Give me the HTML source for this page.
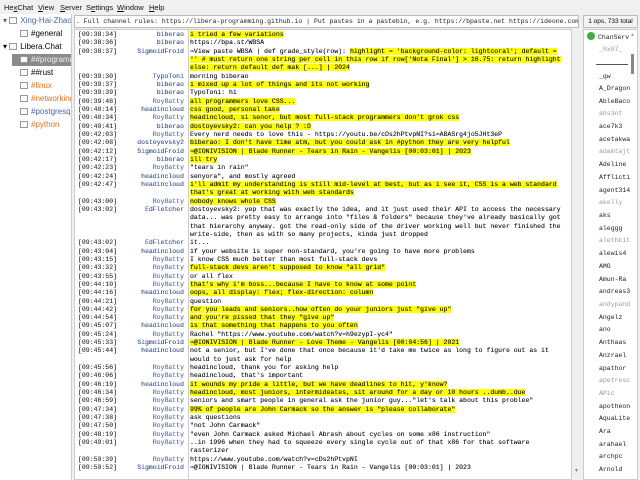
<!DOCTYPE html>
<html><head><meta charset="utf-8"><style>
*{margin:0;padding:0;box-sizing:border-box}
body{width:640px;height:480px;background:#f0f0f0;font-family:"Liberation Sans",sans-serif;position:relative;overflow:hidden}
.menu{position:absolute;top:0;left:0;width:640px;height:14px;font-size:7.5px;color:#111}
.menu span{position:absolute;top:3px}
.tree{position:absolute;left:0;top:14px;width:72px;height:466px;background:#fff;border-right:1px solid #ccc;font-size:8px;overflow:hidden}
.tree div{position:absolute;white-space:nowrap;height:12px;line-height:12px}
.ic{display:inline-block;width:8px;height:7px;border:1px solid #999;margin-right:3px;vertical-align:-1px;background:#fafafa}
.topic{position:absolute;left:74px;top:15px;width:505px;height:13px;background:#fff;border:1px solid #bbb;font:6.5px/11px "Liberation Mono",monospace;white-space:nowrap;overflow:hidden;padding-left:1px;color:#222}
.cnt{position:absolute;left:583px;top:15px;width:55px;height:13px;border:1px solid #bbb;font-size:6.5px;line-height:11px;text-align:center;background:#f4f4f4}
.chat{position:absolute;left:74px;top:29px;width:498px;height:451px;background:#fff;border:1px solid #ccc;overflow:hidden;font:6.5px/8.33px "Liberation Mono",monospace;color:#1a1a1a;padding-top:1px;text-shadow:0 0 0.3px #333}
.sep{position:absolute;left:113px;top:0;width:1px;height:451px;background:#ccc}
.r{position:relative;height:8.33px;white-space:pre}
.t{position:absolute;left:3px;color:#444}
.n{position:absolute;right:387px;color:#4a66b0;text-align:right}
.n.l{color:#6a87d0}
.m{position:absolute;left:115px}
.h{background:#ffff00}
.vs{position:absolute;left:572px;top:29px;width:10px;height:451px;background:#f0f0f0}
.ul{position:absolute;left:583px;top:29px;width:55px;height:451px;background:#fff;border:1px solid #ccc;font:6.5px "Liberation Mono",monospace;color:#222;overflow:hidden}
.ul div{position:absolute;left:15px;white-space:nowrap}
.g{color:#999}
</style></head><body>
<div class="menu"><span style="left:4px">He<u>x</u>Chat</span><span style="left:38px"><u>V</u>iew</span><span style="left:60px"><u>S</u>erver</span><span style="left:86px">S<u>e</u>ttings</span><span style="left:117px"><u>W</u>indow</span><span style="left:149px"><u>H</u>elp</span></div>
<div class="tree">
<div style="top:1px;left:3px;color:#4a66b0">▾ <span class="ic"></span>Xing-Hai-Zhao</div>
<div style="top:14px;left:20px"><span class="ic"></span>#general</div>
<div style="top:27px;left:3px">▾ <span class="ic"></span>Libera.Chat</div>
<div style="top:40px;left:12px;width:60px;background:#8a8a8a;color:#eee;padding-left:8px"><span class="ic"></span>##programming</div>
<div style="top:53px;left:20px"><span class="ic"></span>##rust</div>
<div style="top:66px;left:20px;color:#e07020"><span class="ic"></span>#linux</div>
<div style="top:79px;left:20px;color:#e07020"><span class="ic"></span>#networking</div>
<div style="top:92px;left:20px;color:#4a66b0"><span class="ic"></span>#postgresql</div>
<div style="top:105px;left:20px;color:#e07020"><span class="ic"></span>#python</div>
</div>
<div class="topic">. Full channel rules: https://libera-programming.github.io | Put pastes in a pastebin, e.g. https://bpaste.net https://ideone.com</div>
<div class="cnt">1 ops, 733 total</div>
<div class="chat"><div class="sep"></div>
<div class="r"><span class="t">[09:38:34]</span><span class="n">biberao</span><span class="m"><span class="h">i tried a few variations</span></span></div>
<div class="r"><span class="t">[09:38:36]</span><span class="n">biberao</span><span class="m">https://bpa.st/WBSA</span></div>
<div class="r"><span class="t">[09:38:37]</span><span class="n">SigmoidFroid</span><span class="m">⇒View paste WBSA | def grade_style(row): <span class="h">highlight = 'background-color: lightcoral'; default =</span></span></div>
<div class="r"><span class="m"><span class="h">'' # must return one string per cell in this row if row['Nota Final'] &gt; 16.75: return highlight</span></span></div>
<div class="r"><span class="m"><span class="h">else: return default def mak [...] | 2024</span></span></div>
<div class="r"><span class="t">[09:39:30]</span><span class="n">TypoToni</span><span class="m">morning biberao</span></div>
<div class="r"><span class="t">[09:39:37]</span><span class="n">biberao</span><span class="m"><span class="h">i mixed up a lot of things and its not working</span></span></div>
<div class="r"><span class="t">[09:39:39]</span><span class="n">biberao</span><span class="m">TypoToni: hi</span></div>
<div class="r"><span class="t">[09:39:48]</span><span class="n l">RoyBatty</span><span class="m"><span class="h">all programmers love CSS...</span></span></div>
<div class="r"><span class="t">[09:40:14]</span><span class="n">headincloud</span><span class="m"><span class="h">css good, personal take</span></span></div>
<div class="r"><span class="t">[09:40:34]</span><span class="n l">RoyBatty</span><span class="m"><span class="h">headincloud, si senor, but most full-stack programmers don't grok css</span></span></div>
<div class="r"><span class="t">[09:40:41]</span><span class="n">biberao</span><span class="m"><span class="h">dostoyevsky2: can you help ? :D</span></span></div>
<div class="r"><span class="t">[09:42:03]</span><span class="n l">RoyBatty</span><span class="m">Every nerd needs to love this - https://youtu.be/cDs2hPtvpNI?si=ABASrg4jo5JHt3eP</span></div>
<div class="r"><span class="t">[09:42:08]</span><span class="n">dostoyevsky2</span><span class="m"><span class="h">biberao: I don't have time atm, but you could ask in #python they are very helpful</span></span></div>
<div class="r"><span class="t">[09:42:12]</span><span class="n">SigmoidFroid</span><span class="m"><span class="h">⇒@IONIVISION | Blade Runner - Tears in Rain - Vangelis [00:03:01] | 2023</span></span></div>
<div class="r"><span class="t">[09:42:17]</span><span class="n">biberao</span><span class="m"><span class="h">ill try</span></span></div>
<div class="r"><span class="t">[09:42:23]</span><span class="n l">RoyBatty</span><span class="m">"tears in rain"</span></div>
<div class="r"><span class="t">[09:42:24]</span><span class="n">headincloud</span><span class="m">senyora", and mostly agreed</span></div>
<div class="r"><span class="t">[09:42:47]</span><span class="n">headincloud</span><span class="m"><span class="h">i'll admit my understanding is still mid-level at best, but as i see it, CSS is a web standard</span></span></div>
<div class="r"><span class="m"><span class="h">that's great at working with web standards</span></span></div>
<div class="r"><span class="t">[09:43:00]</span><span class="n l">RoyBatty</span><span class="m"><span class="h">nobody knows whole CSS</span></span></div>
<div class="r"><span class="t">[09:43:02]</span><span class="n">EdFletcher</span><span class="m">dostoyevsky2: yep that was exactly the idea, and it just used their API to access the necessary</span></div>
<div class="r"><span class="m">data... was pretty easy to arrange into "files &amp; folders" because they've already basically got</span></div>
<div class="r"><span class="m">that hierarchy anyway. got the read-only side of the driver working well but never finished the</span></div>
<div class="r"><span class="m">write-side, then as with so many projects, kinda just dropped</span></div>
<div class="r"><span class="t">[09:43:02]</span><span class="n">EdFletcher</span><span class="m">it...</span></div>
<div class="r"><span class="t">[09:43:04]</span><span class="n">headincloud</span><span class="m">if your website is super non-standard, you're going to have more problems</span></div>
<div class="r"><span class="t">[09:43:15]</span><span class="n l">RoyBatty</span><span class="m">I know CSS much better than most full-stack devs</span></div>
<div class="r"><span class="t">[09:43:32]</span><span class="n l">RoyBatty</span><span class="m"><span class="h">full-stack devs aren't supposed to know "all grid"</span></span></div>
<div class="r"><span class="t">[09:43:55]</span><span class="n l">RoyBatty</span><span class="m">or all flex</span></div>
<div class="r"><span class="t">[09:44:10]</span><span class="n l">RoyBatty</span><span class="m"><span class="h">that's why i'm boss...because I have to know at some point</span></span></div>
<div class="r"><span class="t">[09:44:16]</span><span class="n">headincloud</span><span class="m"><span class="h">oops, all display: flex; flex-direction: column</span></span></div>
<div class="r"><span class="t">[09:44:21]</span><span class="n l">RoyBatty</span><span class="m">question</span></div>
<div class="r"><span class="t">[09:44:42]</span><span class="n l">RoyBatty</span><span class="m"><span class="h">for you leads and seniors..how often do your juniors just "give up"</span></span></div>
<div class="r"><span class="t">[09:44:54]</span><span class="n l">RoyBatty</span><span class="m"><span class="h">and you're pissed that they "give up"</span></span></div>
<div class="r"><span class="t">[09:45:07]</span><span class="n">headincloud</span><span class="m"><span class="h">is that something that happens to you often</span></span></div>
<div class="r"><span class="t">[09:45:24]</span><span class="n l">RoyBatty</span><span class="m">Rachel "https://www.youtube.com/watch?v=h9ezypI-yc4"</span></div>
<div class="r"><span class="t">[09:45:33]</span><span class="n">SigmoidFroid</span><span class="m"><span class="h">⇒@IONIVISION | Blade Runner - Love Theme - Vangelis [00:04:56] | 2021</span></span></div>
<div class="r"><span class="t">[09:45:44]</span><span class="n">headincloud</span><span class="m">not a senior, but I've done that once because it'd take me twice as long to figure out as it</span></div>
<div class="r"><span class="m">would to just ask for help</span></div>
<div class="r"><span class="t">[09:45:56]</span><span class="n l">RoyBatty</span><span class="m">headincloud, thank you for asking help</span></div>
<div class="r"><span class="t">[09:46:06]</span><span class="n l">RoyBatty</span><span class="m">headincloud, that's important</span></div>
<div class="r"><span class="t">[09:46:19]</span><span class="n">headincloud</span><span class="m"><span class="h">it wounds my pride a little, but we have deadlines to hit, y'know?</span></span></div>
<div class="r"><span class="t">[09:46:34]</span><span class="n l">RoyBatty</span><span class="m"><span class="h">headincloud, most juniors, intermideates, sit around for a day or 10 hours ..dumb..due</span></span></div>
<div class="r"><span class="t">[09:46:59]</span><span class="n l">RoyBatty</span><span class="m">seniors and smart people in general ask the junior guy..."let's talk about this problee"</span></div>
<div class="r"><span class="t">[09:47:34]</span><span class="n l">RoyBatty</span><span class="m"><span class="h">99% of people are John Carmack so the answer is "please collaborate"</span></span></div>
<div class="r"><span class="t">[09:47:38]</span><span class="n l">RoyBatty</span><span class="m">ask questions</span></div>
<div class="r"><span class="t">[09:47:50]</span><span class="n l">RoyBatty</span><span class="m">"not John Carmack"</span></div>
<div class="r"><span class="t">[09:48:19]</span><span class="n l">RoyBatty</span><span class="m">"even John Carmack asked Michael Abrash about cycles on some x86 instruction"</span></div>
<div class="r"><span class="t">[09:49:01]</span><span class="n l">RoyBatty</span><span class="m">..in 1996 when they had to squeeze every single cycle out of that x86 for that software</span></div>
<div class="r"><span class="m">rasterizer</span></div>
<div class="r"><span class="t">[09:50:39]</span><span class="n l">RoyBatty</span><span class="m">https://www.youtube.com/watch?v=cDs2hPtvpNI</span></div>
<div class="r"><span class="t">[09:50:52]</span><span class="n">SigmoidFroid</span><span class="m">⇒@IONIVISION | Blade Runner - Tears in Rain - Vangelis [00:03:01] | 2023</span></div>
</div>
<div class="vs"><div style="position:absolute;left:3px;bottom:6px;font-size:6px;color:#888">▾</div></div>
<div class="ul">
<div style="top:2px;left:3px"><span style="display:inline-block;width:8px;height:8px;border-radius:50%;background:#3fae3f;vertical-align:-1px;margin-right:3px"></span>ChanServ</div>
<div class="g" style="top:16px">_0x07_</div>
<div style="top:34px;left:12px;width:32px;height:1px;background:#555"></div>
<div style="top:43px">_qw</div>
<div style="top:55px">A_Dragon</div>
<div style="top:68px">AbleBaco</div>
<div class="g" style="top:80px">abs3nt</div>
<div style="top:93px">ace7k3</div>
<div style="top:106px">acetakwa</div>
<div class="g" style="top:118px">adamtajt</div>
<div style="top:131px">Adeline</div>
<div style="top:144px">Afflicti</div>
<div style="top:157px">agent314</div>
<div class="g" style="top:169px">akelly</div>
<div style="top:182px">aks</div>
<div style="top:195px">aleggg</div>
<div class="g" style="top:207px">alethkit</div>
<div style="top:220px">alewis4</div>
<div style="top:233px">AMG</div>
<div style="top:246px">Amun-Ra</div>
<div style="top:258px">andreas3</div>
<div class="g" style="top:271px">andypand</div>
<div style="top:284px">Angelz</div>
<div style="top:296px">ano</div>
<div style="top:309px">Anthaas</div>
<div style="top:322px">Anzrael</div>
<div style="top:335px">apathor</div>
<div class="g" style="top:347px">apetresc</div>
<div class="g" style="top:360px">APic</div>
<div style="top:373px">apotheon</div>
<div style="top:385px">AquaLite</div>
<div style="top:398px">Ara</div>
<div style="top:411px">arahael</div>
<div style="top:423px">archpc</div>
<div style="top:436px">Arnold</div>
<div style="top:24px;left:47px;width:3px;height:20px;background:#888"></div>
<div style="top:2px;left:47px;font-size:5px;color:#999">▲</div>
</div>
</body></html>
